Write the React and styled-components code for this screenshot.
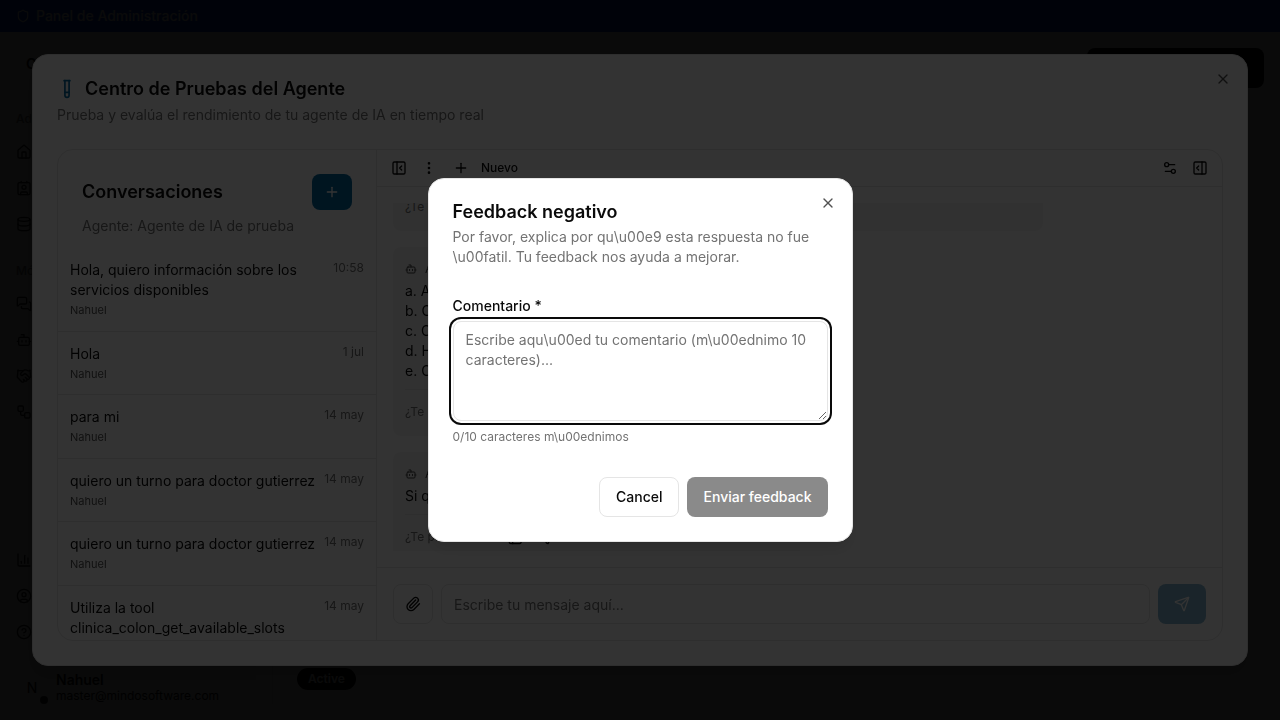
import React, { useLayoutEffect, useRef, useState } from 'react';
import styled, { createGlobalStyle, css } from 'styled-components';
import {
  Bot,
  ChartColumn,
  CircleHelp,
  CircleUser,
  Contact,
  Database,
  EllipsisVertical,
  Handshake,
  House,
  MessagesSquare,
  PanelLeftClose,
  PanelRightOpen,
  Paperclip,
  Plus,
  Send,
  Settings2,
  Shield,
  TestTube,
  ThumbsDown,
  ThumbsUp,
  Workflow,
  X,
} from 'lucide-react';

const conversations = [
  { title: 'Hola, quiero información sobre los servicios disponibles', date: '10:58' },
  { title: 'Hola', date: '1 jul' },
  { title: 'para mi', date: '14 may' },
  { title: 'quiero un turno para doctor gutierrez', date: '14 may' },
  { title: 'quiero un turno para doctor gutierrez', date: '14 may' },
  { title: 'Utiliza la tool clinica_colon_get_available_slots', date: '14 may' },
];

const messages = [
  { wide: true, lines: [] },
  { lines: ['a. A', 'b. C', 'c. C', 'd. H', 'e. C'] },
  { lines: ['Si quieres'] },
];

const navGroups = [
  { label: 'Administrar', icons: [House, Contact, Database] },
  { label: 'Módulos', icons: [MessagesSquare, Bot, Handshake, Workflow] },
];

const App = () => {
  const [comment, setComment] = useState('');
  const threadRef = useRef(null);

  useLayoutEffect(() => {
    threadRef.current.scrollTop = 39;
  }, []);

  return (
    <>
      <GlobalStyle />
      <Page>
        <TopBar>
          <Shield size={14} />
          Panel de Administración
        </TopBar>
        <Columns>
          <Sidebar>
            <Brand>C</Brand>
            {navGroups.map((group) => (
              <NavGroup key={group.label}>
                <NavLabel>{group.label}</NavLabel>
                {group.icons.map((Icon, i) => (
                  <NavItem href="#" key={i} aria-label={group.label}>
                    <Icon size={16} />
                  </NavItem>
                ))}
              </NavGroup>
            ))}
            <BottomNav>
              <NavItem href="#" aria-label="Estadísticas"><ChartColumn size={16} /></NavItem>
              <NavItem href="#" aria-label="Cuenta"><CircleUser size={16} /></NavItem>
              <NavItem href="#" aria-label="Ayuda"><CircleHelp size={16} /></NavItem>
            </BottomNav>
            <User>
              <Avatar>N<Online /></Avatar>
              <div>
                <UserName>Nahuel</UserName>
                <UserMail>master@mindosoftware.com</UserMail>
              </div>
            </User>
          </Sidebar>
          <Main>
            <MainHeader>
              <CreateButton type="button" aria-label="Crear agente"><Plus size={16} /></CreateButton>
            </MainHeader>
            <Card>
              <Badge>Active</Badge>
            </Card>
          </Main>
        </Columns>
      </Page>

      <Overlay>
        <TestDialog role="dialog" aria-labelledby="test-title">
          <CloseButton type="button" aria-label="Cerrar"><X size={16} /></CloseButton>
          <DialogHeader>
            <DialogTitle id="test-title">
              <TestTube size={20} color="#0369a1" />
              Centro de Pruebas del Agente
            </DialogTitle>
            <Muted>Prueba y evalúa el rendimiento de tu agente de IA en tiempo real</Muted>
          </DialogHeader>
          <Workspace>
            <Conversations>
              <ConversationsHeader>
                <TitleRow>
                  <SectionTitle>Conversaciones</SectionTitle>
                  <NewButton type="button" aria-label="Nueva conversación"><Plus size={16} /></NewButton>
                </TitleRow>
                <Muted>Agente: Agente de IA de prueba</Muted>
              </ConversationsHeader>
              <ConversationList>
                {conversations.map((item, i) => (
                  <Conversation key={i}>
                    <ConversationText>
                      <ConversationTitle>{item.title}</ConversationTitle>
                      {i < 5 && <Author>Nahuel</Author>}
                    </ConversationText>
                    <DateText>{item.date}</DateText>
                  </Conversation>
                ))}
              </ConversationList>
            </Conversations>
            <Chat>
              <Toolbar>
                <ToolButton type="button" aria-label="Ocultar conversaciones"><PanelLeftClose size={16} /></ToolButton>
                <ToolButton type="button" aria-label="Más opciones"><EllipsisVertical size={16} /></ToolButton>
                <ToolButton type="button" $wide><Plus size={16} />Nuevo</ToolButton>
                <Spacer />
                <ToolButton type="button" aria-label="Ajustes"><Settings2 size={16} /></ToolButton>
                <ToolButton type="button" aria-label="Abrir panel"><PanelRightOpen size={16} /></ToolButton>
              </Toolbar>
              <ThreadArea>
                <Thread ref={threadRef}>
                  {messages.map((message, i) => (
                    <Bubble key={i} $wide={message.wide}>
                      {message.lines.length > 0 && (
                        <BubbleHeader><Bot size={12} />Agente</BubbleHeader>
                      )}
                      {message.lines.map((line) => <Line key={line}>{line}</Line>)}
                      <Rating>
                        ¿Te pareció útil?
                        <RateButton type="button" aria-label="Útil"><ThumbsUp size={16} /></RateButton>
                        <RateButton type="button" aria-label="No útil"><ThumbsDown size={16} /></RateButton>
                      </Rating>
                    </Bubble>
                  ))}
                </Thread>
              </ThreadArea>
              <Composer>
                <AttachButton type="button" aria-label="Adjuntar archivo"><Paperclip size={16} /></AttachButton>
                <MessageInput type="text" aria-label="Mensaje" placeholder="Escribe tu mensaje aquí..." />
                <SendButton type="button" aria-label="Enviar" disabled><Send size={16} /></SendButton>
              </Composer>
            </Chat>
          </Workspace>
        </TestDialog>
      </Overlay>

      <Overlay>
        <FeedbackDialog role="dialog" aria-modal="true" aria-labelledby="feedback-title">
          <CloseButton type="button" aria-label="Cerrar"><X size={16} /></CloseButton>
          <DialogHeader>
            <DialogTitle id="feedback-title">Feedback negativo</DialogTitle>
            <Muted>
              {'Por favor, explica por qu\\u00e9 esta respuesta no fue \\u00fatil. Tu feedback nos ayuda a mejorar.'}
            </Muted>
          </DialogHeader>
          <Field>
            <Label htmlFor="comment">Comentario *</Label>
            <Textarea
              id="comment"
              value={comment}
              onChange={(e) => setComment(e.target.value)}
              placeholder={'Escribe aqu\\u00ed tu comentario (m\\u00ednimo 10 caracteres)...'}
            />
            <Counter>{comment.length}{'/10 caracteres m\\u00ednimos'}</Counter>
          </Field>
          <Actions>
            <OutlineButton type="button">Cancel</OutlineButton>
            <SubmitButton type="button" disabled={comment.length < 10}>Enviar feedback</SubmitButton>
          </Actions>
        </FeedbackDialog>
      </Overlay>
    </>
  );
};

const GlobalStyle = createGlobalStyle`
  * {
    box-sizing: border-box;
  }

  body {
    margin: 0;
    overflow: hidden;
    color: #0a0a0a;
    font-family: Inter, 'Liberation Sans', sans-serif;
    font-size: 14px;
    line-height: 20px;
  }

  h2, h3, p, ul {
    margin: 0;
    padding: 0;
  }

  button, input, textarea {
    font: inherit;
    color: inherit;
  }

  button {
    display: inline-flex;
    align-items: center;
    justify-content: center;
    border: none;
    background: none;
    padding: 0;
    cursor: pointer;
  }

  svg {
    flex-shrink: 0;
  }
`;

const Page = styled.div`
  display: flex;
  flex-direction: column;
  height: 100vh;
  background: #fff;
`;

const TopBar = styled.div`
  display: flex;
  align-items: center;
  gap: 6px;
  height: 32px;
  flex-shrink: 0;
  padding: 0 16px;
  background: #1447e6;
  color: #fff;
  font-size: 14px;
  font-weight: 500;
`;

const Columns = styled.div`
  display: flex;
  flex: 1;
  min-height: 0;
`;

const Sidebar = styled.aside`
  display: flex;
  flex-direction: column;
  width: 256px;
  flex-shrink: 0;
  background: #fafafa;
`;

const Brand = styled.div`
  height: 64px;
  padding: 22px 26px;
  font-weight: 600;
`;

const NavGroup = styled.nav`
  display: flex;
  flex-direction: column;
  gap: 4px;
  padding: 8px;
`;

const NavLabel = styled.div`
  padding: 5px 8px 3px;
  color: #737373;
  font-size: 12px;
  font-weight: 500;
`;

const NavItem = styled.a`
  display: flex;
  align-items: center;
  height: 32px;
  padding: 0 8px;
  color: #262626;
`;

const BottomNav = styled(NavGroup)`
  margin-top: auto;
`;

const User = styled.div`
  display: flex;
  align-items: center;
  gap: 8px;
  height: 64px;
  padding: 0 16px;
`;

const Avatar = styled.div`
  position: relative;
  display: flex;
  align-items: center;
  justify-content: center;
  width: 32px;
  height: 32px;
  border-radius: 16px;
`;

const Online = styled.span`
  position: absolute;
  right: 0;
  bottom: 0;
  width: 8px;
  height: 8px;
  border-radius: 4px;
  background: #262626;
`;

const UserName = styled.div`
  line-height: 16px;
  font-weight: 600;
`;

const UserMail = styled.div`
  font-size: 12px;
  line-height: 16px;
`;

const Main = styled.main`
  display: flex;
  flex-direction: column;
  flex: 1;
  gap: 24px;
  padding: 16px;
`;

const MainHeader = styled.div`
  display: flex;
  justify-content: flex-end;
`;

const CreateButton = styled.button`
  min-width: 177px;
  height: 40px;
  border-radius: 8px;
  background: #0a0a0a;
  color: #fafafa;
`;

const Card = styled.section`
  display: flex;
  align-items: flex-end;
  flex: 1;
  padding: 14px 24px;
  border-left: 1px solid #e5e5e5;
`;

const Badge = styled.span`
  padding: 3px 11px;
  border-radius: 11px;
  background: #0a0a0a;
  color: #fafafa;
  font-size: 12px;
  line-height: 16px;
  font-weight: 600;
`;

const Overlay = styled.div`
  position: fixed;
  inset: 0;
  display: flex;
  align-items: center;
  justify-content: center;
  background: rgba(0, 0, 0, 0.8);
`;

const Dialog = styled.div`
  position: relative;
  display: flex;
  flex-direction: column;
  padding: 24px;
  border: 1px solid #e5e5e5;
  border-radius: 16px;
  background: #fff;
  box-shadow: 0 10px 15px -3px rgba(0, 0, 0, 0.1), 0 4px 6px -4px rgba(0, 0, 0, 0.1);
`;

const TestDialog = styled(Dialog)`
  gap: 24px;
  width: 95vw;
  height: 85vh;
`;

const FeedbackDialog = styled(Dialog)`
  gap: 16px;
  width: 425px;
`;

const CloseButton = styled.button`
  position: absolute;
  top: 16px;
  right: 16px;
  opacity: 0.7;
`;

const DialogHeader = styled.header`
  display: flex;
  flex-direction: column;
  gap: 6px;
`;

const DialogTitle = styled.h2`
  display: flex;
  align-items: center;
  gap: 8px;
  font-size: 18px;
  line-height: 18px;
  font-weight: 600;
`;

const Muted = styled.p`
  color: #737373;
  font-size: 14px;
`;

const Workspace = styled.div`
  display: flex;
  flex: 1;
  min-height: 0;
  overflow: hidden;
  border: 1px solid #e5e5e5;
  border-radius: 16px;
`;

const Conversations = styled.aside`
  display: flex;
  flex-direction: column;
  width: 319px;
  flex-shrink: 0;
  border-right: 1px solid #e5e5e5;
`;

const ConversationsHeader = styled.div`
  display: flex;
  flex-direction: column;
  gap: 6px;
  padding: 24px 24px 12px;
`;

const TitleRow = styled.div`
  display: flex;
  align-items: center;
  justify-content: space-between;
`;

const SectionTitle = styled.h3`
  font-size: 18px;
  line-height: 28px;
  font-weight: 600;
`;

const NewButton = styled.button`
  width: 40px;
  height: 36px;
  border-radius: 8px;
  background: #0369a1;
  color: #fff;
`;

const ConversationList = styled.ul`
  flex: 1;
  min-height: 0;
  overflow: hidden;
  list-style: none;
`;

const Conversation = styled.li`
  display: flex;
  gap: 8px;
  padding: 12px;
  border-bottom: 1px solid #e5e5e5;
`;

const ConversationText = styled.div`
  flex: 1;
  min-width: 0;
`;

const ConversationTitle = styled.p`
  overflow-wrap: break-word;
`;

const Author = styled.p`
  margin-top: 2px;
  color: #525252;
  font-size: 11px;
  line-height: 1.5;
`;

const DateText = styled.span`
  color: #737373;
  font-size: 12px;
  line-height: 16px;
  white-space: nowrap;
`;

const Chat = styled.section`
  display: flex;
  flex-direction: column;
  flex: 1;
  min-width: 0;
`;

const Toolbar = styled.div`
  display: flex;
  align-items: center;
  gap: 2px;
  height: 37px;
  padding: 0 8px;
  border-bottom: 1px solid #e5e5e5;
`;

const ToolButton = styled.button`
  width: 28px;
  height: 28px;
  ${(p) => p.$wide && css`
    gap: 12px;
    width: auto;
    padding: 0 8px;
    font-size: 12px;
    font-weight: 500;
  `}
`;

const Spacer = styled.div`
  flex: 1;
`;

const ThreadArea = styled.div`
  display: flex;
  flex: 1;
  min-height: 0;
  padding: 16px;
`;

const Thread = styled.div`
  display: flex;
  flex-direction: column;
  align-items: flex-start;
  flex: 1;
  gap: 16px;
  overflow: hidden;
`;

const Bubble = styled.article`
  flex-shrink: 0;
  width: ${(p) => (p.$wide ? '80%' : '50%')};
  padding: 12px;
  border-radius: 8px;
  background: #f5f5f5;
`;

const BubbleHeader = styled.div`
  display: flex;
  align-items: center;
  gap: 8px;
  height: 20px;
  margin-bottom: 2px;
  color: #404040;
  font-size: 12px;
`;

const Line = styled.p`
  white-space: nowrap;
`;

const Rating = styled.div`
  display: flex;
  align-items: center;
  gap: 8px;
  margin-top: 8px;
  padding-top: 10px;
  border-top: 1px solid #e5e5e5;
  color: #737373;
  font-size: 12px;
`;

const RateButton = styled.button`
  width: 24px;
  height: 24px;
  color: #0a0a0a;
`;

const Composer = styled.form`
  display: flex;
  gap: 8px;
  padding: 16px;
  border-top: 1px solid #e5e5e5;
`;

const AttachButton = styled.button`
  width: 40px;
  height: 40px;
  border: 1px solid #e5e5e5;
  border-radius: 8px;
`;

const MessageInput = styled.input`
  flex: 1;
  min-width: 0;
  height: 40px;
  padding: 0 12px;
  border: 1px solid #e5e5e5;
  border-radius: 8px;
  background: #fff;

  &::placeholder {
    color: #737373;
  }
`;

const SendButton = styled(NewButton)`
  width: 48px;
  height: 40px;
  opacity: 0.5;
`;

const Field = styled.div`
  display: flex;
  flex-direction: column;
  gap: 8px;
  padding: 16px 0;
`;

const Label = styled.label`
  line-height: 14px;
  font-weight: 500;
`;

const Textarea = styled.textarea`
  display: block;
  width: 100%;
  min-height: 100px;
  padding: 8px 12px;
  border: 1px solid #e5e5e5;
  border-radius: 8px;
  outline: none;
  resize: vertical;
  background: #fff;
  box-shadow: 0 0 0 2px #fff, 0 0 0 4px #0a0a0a;

  &::placeholder {
    color: #737373;
  }
`;

const Counter = styled.p`
  color: #737373;
  font-size: 12px;
  line-height: 16px;
`;

const Actions = styled.footer`
  display: flex;
  justify-content: flex-end;
  gap: 8px;
`;

const OutlineButton = styled.button`
  height: 40px;
  padding: 0 16px;
  border: 1px solid #e5e5e5;
  border-radius: 8px;
  background: #fff;
  font-weight: 500;
`;

const SubmitButton = styled.button`
  height: 40px;
  padding: 0 16px;
  border-radius: 8px;
  background: #171717;
  color: #fff;
  font-weight: 500;

  &:disabled {
    opacity: 0.5;
  }
`;

export default App;
